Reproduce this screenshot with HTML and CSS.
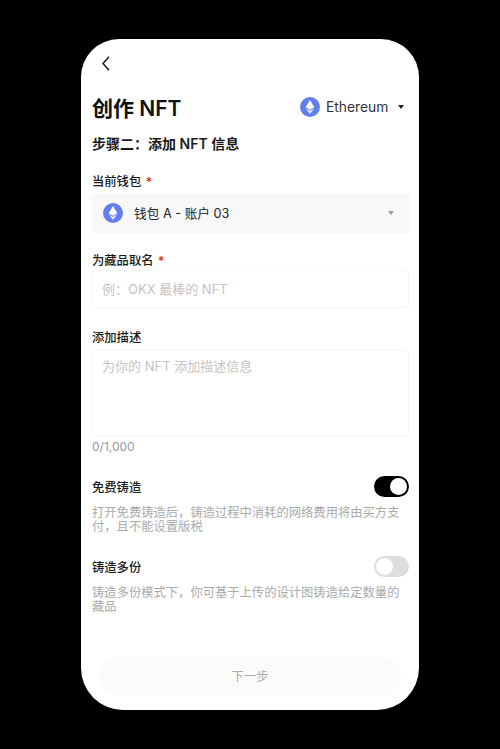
FILE: index.html
```html
<!DOCTYPE html>
<html>
<head>
    <title>创作 NFT</title>
    <meta name="viewport" content="user-scalable=yes, width=device-width" />
    <link rel="stylesheet" href="styles.css">
</head>
<body>
    <div class="phone">
        <div class="back">
            <svg width="8" height="15" viewBox="0 0 8 15"><path d="M7 0.8 L1 7.5 L7 14.2" fill="none" stroke="#111" stroke-width="1.4"/></svg>
        </div>
        <div class="head">
            <h1>创作 NFT</h1>
            <div class="chain">
                <svg class="eth" width="20" height="20" viewBox="0 0 20 20"><circle cx="10" cy="10" r="10" fill="#627eea"/><path d="M10 3 L14.3 10.2 L10 12.7 L5.7 10.2 Z" fill="#fff"/><path d="M10 13.7 L14.3 11.2 L10 17 L5.7 11.2 Z" fill="#fff" opacity=".85"/></svg>
                <span>Ethereum</span>
                <i class="caret"></i>
            </div>
        </div>
        <h2>步骤二：添加 NFT 信息</h2>

        <div class="label first">当前钱包 <b>*</b></div>
        <div class="select">
            <svg class="eth" width="20" height="20" viewBox="0 0 20 20"><circle cx="10" cy="10" r="10" fill="#627eea"/><path d="M10 3 L14.3 10.2 L10 12.7 L5.7 10.2 Z" fill="#fff"/><path d="M10 13.7 L14.3 11.2 L10 17 L5.7 11.2 Z" fill="#fff" opacity=".85"/></svg>
            <span>钱包 A - 账户 03</span>
            <i class="caret small"></i>
        </div>

        <div class="label second">为藏品取名 <b>*</b></div>
        <div class="input">例：OKX 最棒的 NFT</div>

        <div class="label third">添加描述</div>
        <div class="input area">为你的 NFT 添加描述信息</div>
        <div class="count">0/1,000</div>

        <div class="row free">
            <span>免费铸造</span>
            <div class="toggle on"><i></i></div>
        </div>
        <p class="desc">打开免费铸造后，铸造过程中消耗的网络费用将由买方支付，且不能设置版税</p>

        <div class="row multi">
            <span>铸造多份</span>
            <div class="toggle"><i></i></div>
        </div>
        <p class="desc">铸造多份模式下，你可基于上传的设计图铸造给定数量的藏品</p>

        <div class="next">下一步</div>
    </div>
</body>
</html>
```

FILE: styles.css
```css
body {
    margin: 0px;
    height: 749px;
    overflow: hidden;
    background-color: #000;
    font-family: Inter, "Noto Sans CJK SC", sans-serif;
    color: #1a1a1a;
}
.phone {
    box-sizing: border-box;
    width: 338px;
    height: 671px;
    margin: 39px 0 0 81px;
    padding: 0 10px 0 11px;
    background-color: #fff;
    border-radius: 38px 38px 42px 42px;
    overflow: hidden;
}
.back {
    height: 15px;
    padding: 17px 0 0 10px;
}
.back svg {
    display: block;
}
.head {
    display: flex;
    align-items: center;
    justify-content: space-between;
    margin-top: 23px;
    height: 30px;
}
h1 {
    margin: 0px;
    font-size: 21px;
    line-height: 30px;
    font-weight: 600;
    color: #111;
}
.chain {
    display: flex;
    align-items: center;
    margin-top: -4px;
    padding-right: 5px;
    font-size: 13.8px;
    color: #333;
}
.chain span {
    margin-left: 6px;
    width: 72px;
}
.caret {
    display: block;
    width: 0;
    height: 0;
    border-left: 3px solid transparent;
    border-right: 3px solid transparent;
    border-top: 4px solid #222;
}
.caret.small {
    margin-left: auto;
    margin-right: 15px;
    border-top-color: #999;
}
h2 {
    margin: 10px 0 0 0;
    font-size: 14px;
    line-height: 20px;
    font-weight: 600;
}
.label {
    font-size: 12.3px;
    line-height: 18px;
    font-weight: 500;
}
.label b {
    color: #d9343b;
    margin-left: 1px;
}
.label.first {
    margin-top: 19px;
}
.label.second {
    margin-top: 19px;
}
.label.third {
    margin-top: 21px;
}
.select {
    display: flex;
    align-items: center;
    box-sizing: border-box;
    height: 39px;
    margin-top: 3px;
    padding: 0 0 2px 11px;
    background-color: #f8f8f8;
    border-radius: 4px;
    box-shadow: 0 0 2px #eee;
    font-size: 12.7px;
    color: #222;
}
.select span {
    margin-left: 11px;
}
.eth {
    flex-shrink: 0;
}
.input {
    box-sizing: border-box;
    height: 38px;
    margin-top: 0px;
    padding: 9px 9px;
    border: 1px solid #f5f5f5;
    border-radius: 4px;
    font-size: 13px;
    line-height: 18px;
    color: #c4c4c4;
}
.input.area {
    height: 88px;
    margin-top: 2px;
    padding-top: 7px;
}
.count {
    margin-top: 1px;
    font-size: 12px;
    line-height: 17px;
    color: #999;
}
.row {
    display: flex;
    align-items: center;
    justify-content: space-between;
    height: 21px;
    font-size: 12.3px;
    font-weight: 500;
}
.row.free {
    margin-top: 21px;
}
.row.multi {
    margin-top: 22px;
}
.toggle {
    box-sizing: border-box;
    display: flex;
    width: 35px;
    height: 21px;
    padding: 2px;
    border-radius: 11px;
    background-color: #ddd;
}
.toggle i {
    display: block;
    width: 17px;
    height: 17px;
    border-radius: 50%;
    background-color: #fff;
}
.toggle.on {
    background-color: #000;
    justify-content: flex-end;
}
.desc {
    margin: 9px 0 0 0;
    font-size: 12.3px;
    line-height: 14px;
    color: #aaa;
}
.next {
    width: 302px;
    height: 40px;
    margin: 42px 0 0 7px;
    border-radius: 20px;
    background-color: #fbfbfb;
    font-size: 12.3px;
    line-height: 41px;
    text-align: center;
    color: #aaa;
}
```
